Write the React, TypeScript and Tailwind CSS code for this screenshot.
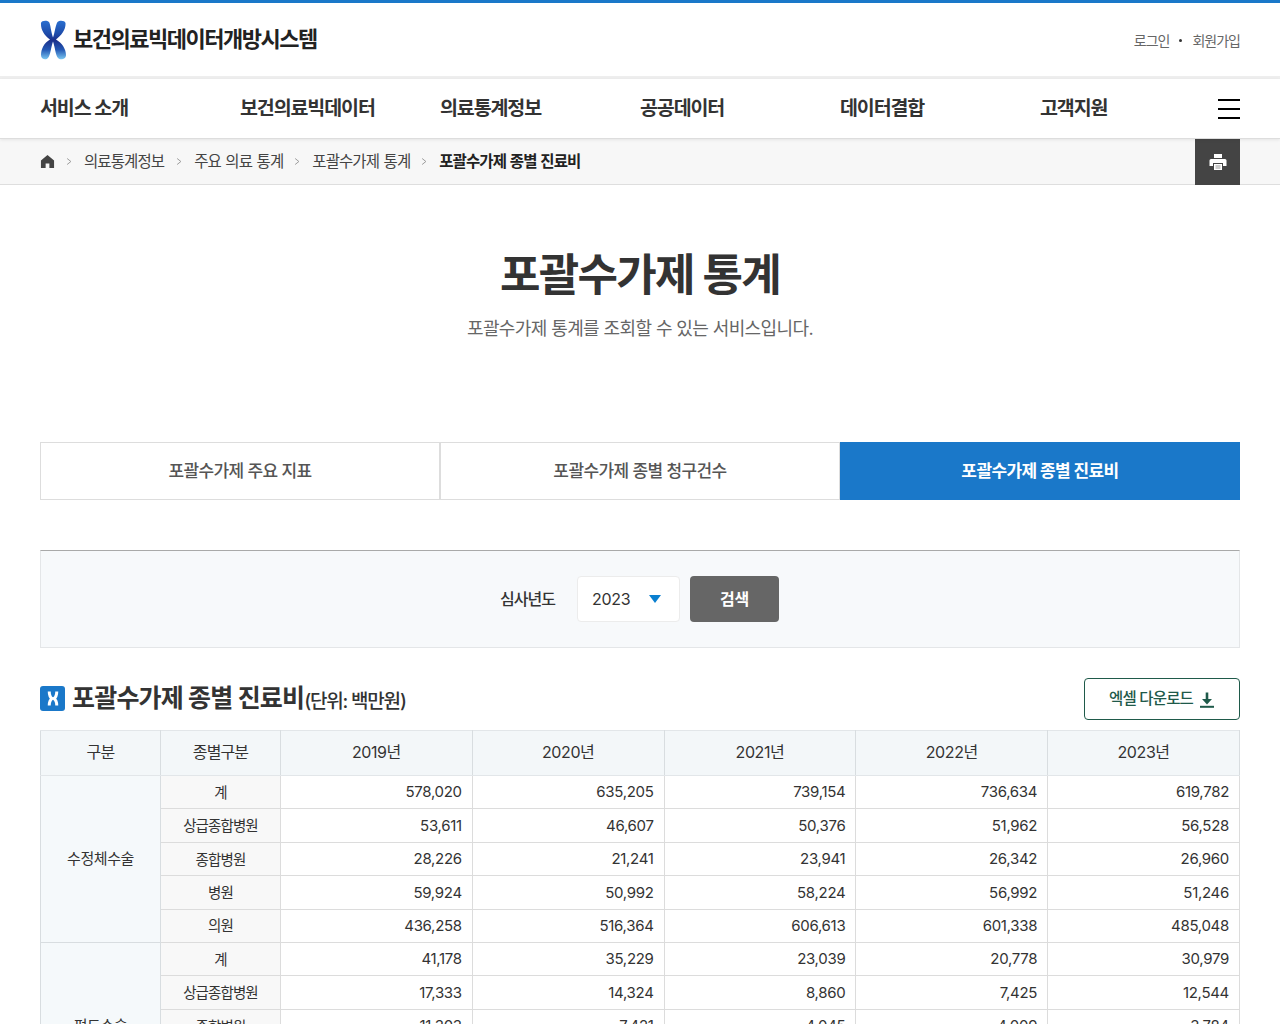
const years = ['2019년', '2020년', '2021년', '2022년', '2023년'];
const rows: [string, string[]][] = [
  ['계', ['578,020', '635,205', '739,154', '736,634', '619,782']],
  ['상급종합병원', ['53,611', '46,607', '50,376', '51,962', '56,528']],
  ['종합병원', ['28,226', '21,241', '23,941', '26,342', '26,960']],
  ['병원', ['59,924', '50,992', '58,224', '56,992', '51,246']],
  ['의원', ['436,258', '516,364', '606,613', '601,338', '485,048']],
  ['계', ['41,178', '35,229', '23,039', '20,778', '30,979']],
  ['상급종합병원', ['17,333', '14,324', '8,860', '7,425', '12,544']],
  ['종합병원', ['11,303', '7,421', '4,045', '4,009', '3,784']],
  ['병원', ['', '', '', '', '']],
  ['의원', ['', '', '', '', '']],
];
const nav = ['서비스 소개', '보건의료빅데이터', '의료통계정보', '공공데이터', '데이터결합', '고객지원'];

function Logo({ className }: { className: string }) {
  return (
    <svg viewBox="0 0 26 40" className={className}>
      <defs>
        <linearGradient id="lg" x1="0" y1="0" x2="0" y2="1">
          <stop offset="0" stopColor="#2a6fd0" />
          <stop offset="0.35" stopColor="#1d4aa8" />
          <stop offset="0.5" stopColor="#1b2f8a" />
          <stop offset="0.75" stopColor="#2358b4" />
          <stop offset="1" stopColor="#7cc8f2" />
        </linearGradient>
      </defs>
      <path
        d="M1 3 C1.500 0.500 7 0 9 2 C10.500 4 11 12 13 17.500 C15 12 15.500 5 17.500 2 C19.500 0 25 0.500 25.500 3 C26 9 22 15 16 19.500 C22 23 26 29 26 35 C26 39.500 20 40.500 18 38 C15.500 35 15 27 13 21.500 C11 27 10.500 35 8 38 C6 40.500 1 39.500 1 35 C1 29 4 23 10 19.500 C4 15 0.500 9 1 3 Z"
        fill="url(#lg)"
      />
    </svg>
  );
}

function Chevron() {
  return <svg viewBox="0 0 8 10" className="inline-block w-[6px] h-[9px]"><path d="M1.500 1 L6.500 5 L1.500 9" stroke="#999" strokeWidth="1.300" fill="none" /></svg>;
}

export default function App() {
  return (
    <div className="w-[1280px] h-[1024px] overflow-hidden bg-white text-[#333] font-['Inter','Noto_Sans_CJK_KR',sans-serif] tracking-[-0.4px]">
      <header className="border-t-[3px] border-[#1a78c9] h-[79px] border-b-[3px] border-b-[#eeeeee] box-border">
        <div className="flex items-center justify-between h-[73px] px-10">
          <div className="flex items-center gap-[7px]">
            <Logo className="w-[26px] h-[40px]" />
            <span className="text-[22px] font-bold text-[#222] tracking-[-1.5px]">보건의료빅데이터개방시스템</span>
          </div>
          <div className="flex items-center text-[14px] text-[#666] pt-[2px] tracking-[-1px]">
            <span>로그인</span>
            <span className="w-[3px] h-[3px] rounded-full bg-[#333] mx-[10px]" />
            <span>회원가입</span>
          </div>
        </div>
      </header>
      <nav className="h-[60px] flex items-center pl-10 pr-10 pt-[1px] border-b border-[#dddddd] shadow-[0_1px_3px_rgba(0,0,0,0.08)] relative bg-white">
        {nav.map((n, i) => (
          <div key={n} className={i === 5 ? 'w-[120px] shrink-0 text-[19.500px] font-semibold text-[#333] tracking-[-1.100px] whitespace-nowrap' : 'w-[200px] shrink-0 text-[19.500px] font-semibold text-[#333] tracking-[-1.100px] whitespace-nowrap'}>{n}</div>
        ))}
        <div className="ml-auto flex flex-col gap-[7px] w-[22px]">
          <span className="h-[2px] bg-black" />
          <span className="h-[2px] bg-black" />
          <span className="h-[2px] bg-black" />
        </div>
      </nav>
      <div className="h-[46px] bg-[#f7f7f7] border-b border-[#dedede] flex items-center pl-10 pr-10 text-[15.500px] text-[#444] tracking-[-0.9px] [word-spacing:1px]">
        <svg viewBox="0 0 16 16" className="w-[15px] h-[15px] mr-[11px]"><path d="M8 1 L15 7 V15 H10 V10 H6 V15 H1 V7 Z" fill="#444" /></svg>
        <Chevron /><span className="ml-[12px]">의료통계정보</span>
        <span className="ml-[12px] flex"><Chevron /></span><span className="ml-[12px]">주요 의료 통계</span>
        <span className="ml-[11px] flex"><Chevron /></span><span className="ml-[12px]">포괄수가제 통계</span>
        <span className="ml-[11px] flex"><Chevron /></span><span className="ml-[12px] font-bold text-[#222]">포괄수가제 종별 진료비</span>
        <div className="ml-auto w-[45px] h-[46px] bg-[#444] flex items-center justify-center">
          <svg viewBox="0 0 18 18" className="w-[18px] h-[18px]">
            <path d="M5 1 H13 V5 H5 Z" fill="#fff" />
            <path d="M2 6 H16 Q17.500 6 17.500 7.500 V13 H14 V10 H4 V13 H0.500 V7.500 Q0.500 6 2 6 Z" fill="#fff" />
            <rect x="5" y="11" width="8" height="6" fill="#fff" />
            <path d="M6.500 13 H11.500 M6.500 15 H11.500" stroke="#999" strokeWidth="1" />
          </svg>
        </div>
      </div>
      <section className="flex flex-col items-center pt-[60px] h-[257px] box-border">
        <h1 className="text-[44px] leading-[58px] font-bold text-[#333] tracking-[-1.700px] mt-[1px]">포괄수가제 통계</h1>
        <p className="mt-[12px] text-[18px] leading-[26px] text-[#666] tracking-[-0.6px]">포괄수가제 통계를 조회할 수 있는 서비스입니다.</p>
      </section>
      <div className="mx-10 flex h-[58px] text-[17px] font-medium text-[#555] tracking-[-0.6px]">
        <div className="w-[400px] border border-[#dddddd] flex items-center justify-center pt-[1px]">포괄수가제 주요 지표</div>
        <div className="w-[400px] border-y border-x border-[#dddddd] flex items-center justify-center pt-[1px]">포괄수가제 종별 청구건수</div>
        <div className="w-[400px] bg-[#1a78c9] text-white font-bold flex items-center justify-center pt-[1px]">포괄수가제 종별 진료비</div>
      </div>
      <div className="mx-10 mt-[50px] h-[98px] bg-[#f7f9fb] border-t border-t-[#a9a9a9] border-x border-b border-[#e4e6e8] flex items-center justify-center box-border">
        <span className="text-[16px] font-medium text-[#333] mr-[22px] tracking-[-1px]">심사년도</span>
        <div className="w-[103px] h-[46px] bg-white border border-[#ececec] rounded-[4px] flex items-center justify-between pl-[14px] pr-[18px] text-[16px] text-[#333] tracking-[-0.3px]">
          2023
          <span className="w-0 h-0 border-l-[6px] border-r-[6px] border-t-[8px] border-l-transparent border-r-transparent border-t-[#0a7fd0]" />
        </div>
        <div className="ml-[10px] w-[89px] h-[46px] bg-[#666] rounded-[4px] text-white font-bold text-[16px] flex items-center justify-center mr-[1px]">검색</div>
      </div>
      <div className="mx-10 mt-[30px] h-[42px] flex items-center justify-between">
        <div className="flex items-center">
          <span className="w-[25px] h-[25px] rounded-[3px] bg-[#1a78c9] flex items-center justify-center mr-[7px] mb-[2px]">
            <svg viewBox="0 0 12 16" className="w-[12px] h-[15px]"><path d="M2 0.500 C2 6 3.500 7 5 8 C3.500 9 2 10 2 15.500 M10 0.500 C10 6 8.500 7 7 8 C8.500 9 10 10 10 15.500" stroke="#fff" strokeWidth="3.200" fill="none" /></svg>
          </span>
          <h2 className="text-[25px] font-bold text-[#333] tracking-[-0.8px]">포괄수가제 종별 진료비</h2>
          <span className="text-[19px] font-medium text-[#333] mt-[6px] tracking-[-1.200px]">(단위: 백만원)</span>
        </div>
        <div className="w-[156px] h-[42px] border border-[#1f5a4a] rounded-[4px] flex items-center justify-center gap-[6px] text-[#1f5a4a] text-[15.500px] font-medium tracking-[-0.8px] pb-[1px]">
          엑셀 다운로드
          <svg viewBox="0 0 16 16" className="w-[16px] h-[16px] mt-[2px]"><path d="M8 0.500 V9" stroke="#1f5a4a" strokeWidth="2.600" fill="none" /><path d="M3 7 H13 L8 12.500 Z" fill="#1f5a4a" /><path d="M1 14.800 H15" stroke="#1f5a4a" strokeWidth="2" fill="none" /></svg>
        </div>
      </div>
      <div className="mx-10 mt-[10px]">
        <table className="w-[1199px] table-fixed border-collapse text-[16px] text-[#333]">
          <colgroup>
            <col className="w-[120px]" />
            <col className="w-[120px]" />
            <col className="w-[191.800px]" />
            <col className="w-[191.800px]" />
            <col className="w-[191.800px]" />
            <col className="w-[191.800px]" />
            <col className="w-[191.800px]" />
          </colgroup>
          <thead>
            <tr className="h-[45px] bg-[#f3f7f9]">
              <th className="font-normal border border-[#d8dde0] border-y-[#e2e6e9] tracking-[-0.6px] pb-[2px]">구분</th>
              <th className="font-normal border border-[#d8dde0] border-y-[#e2e6e9] tracking-[-0.9px] pb-[2px]">종별구분</th>
              {years.map((y) => <th key={y} className="font-normal border border-[#d8dde0] border-y-[#e2e6e9] text-[16px] tracking-[-0.4px] pb-[2px]">{y}</th>)}
            </tr>
          </thead>
          <tbody>
            {rows.map(([k, vals], i) => (
              <tr key={i} className="h-[33.400px]">
                {i === 0 && <td rowSpan={5} className="bg-[#f5f9fb] border border-[#d8dde0] text-center tracking-[-0.4px] text-[15px]">수정체수술</td>}
                {i === 5 && <td rowSpan={5} className="bg-[#f5f9fb] border border-[#d8dde0] text-center tracking-[-0.4px] text-[15px]">편도수술</td>}
                <td className="bg-[#f8f8f8] border border-[#dcdcdc] text-center text-[14.500px] tracking-[-0.9px] p-0 pt-[1px]">{k}</td>
                {vals.map((v, j) => <td key={j} className="border border-[#dcdcdc] text-right pr-[10px] text-[15px] tracking-[-0.3px] p-0 pt-[1px]">{v}</td>)}
              </tr>
            ))}
          </tbody>
        </table>
      </div>
    </div>
  );
}
